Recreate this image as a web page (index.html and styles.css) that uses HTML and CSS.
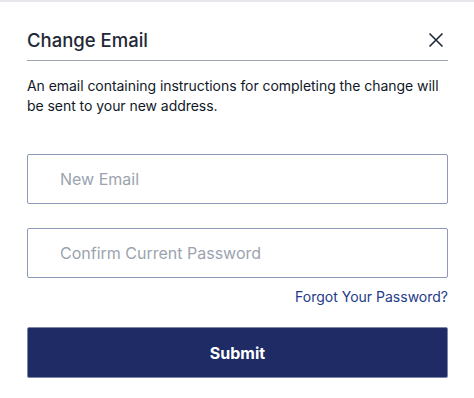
FILE: index.html
```html
<!DOCTYPE html>
<html lang="en">
<head>
    <meta charset="UTF-8">
    <meta name="viewport" content="width=device-width, initial-scale=1.0">
    <title>Change Email</title>
    <link rel="stylesheet" href="styles.css">
</head>
<body>
    <div class="modal">
        <div class="head">
            <h2 class="title">Change Email</h2>
            <button class="close" type="button" aria-label="Close">
                <svg width="16" height="16" viewBox="0 0 16 16">
                    <path d="M1.5 1.5L14.5 14.5M14.5 1.5L1.5 14.5" stroke="#1f2937" stroke-width="1.6" fill="none"/>
                </svg>
            </button>
        </div>
        <p class="info">An email containing instructions for completing the change will be sent to your new address.</p>
        <form class="form">
            <input class="field" type="email" placeholder="New Email">
            <input class="field" type="password" placeholder="Confirm Current Password">
            <div class="links">
                <a class="forgot" href="#">Forgot Your Password?</a>
            </div>
            <button class="submit" type="button">Submit</button>
        </form>
    </div>
</body>
</html>
```

FILE: styles.css
```css
body,h2,p{
    margin: 0;
    padding: 0;
}
body{
    background: #fff;
    border-top: 2px solid #e5e7eb;
    font-family: Inter, "Noto Sans", sans-serif;
    color: #1f2937;
}
.modal{
    padding: 0 26px 0 27px;
}
.head{
    display: flex;
    align-items: flex-end;
    justify-content: space-between;
    height: 59px;
    padding-bottom: 8px;
    border-bottom: 1px solid #9ca3af;
    box-sizing: border-box;
}
.title{
    font-size: 18.5px;
    font-weight: 500;
    line-height: 24px;
}
.close{
    border: 0;
    background: none;
    padding: 0;
    margin-right: 4px;
    margin-bottom: 4px;
    width: 16px;
    height: 16px;
    cursor: pointer;
}
.info{
    margin-top: 15px;
    font-size: 14px;
    line-height: 20px;
    letter-spacing: -0.05px;
    color: #111827;
}
.form{
    margin-top: 38px;
    display: flex;
    flex-direction: column;
}
.field{
    height: 50px;
    box-sizing: border-box;
    border: 1px solid #8e99b8;
    border-radius: 2px;
    padding: 0 32px;
    font-family: inherit;
    font-size: 16px;
    color: #1f2937;
    margin-bottom: 24px;
}
.field::placeholder{
    color: #9ca3af;
}
.links{
    display: flex;
    justify-content: flex-end;
    margin-top: -15px;
}
.forgot{
    color: #1e3a8a;
    font-size: 14px;
    line-height: 20px;
    text-decoration: none;
}
.submit{
    margin-top: 20px;
    height: 51px;
    border: 1px solid #7c87ab;
    border-radius: 2px;
    background: #1e2b65;
    color: #fff;
    font-family: inherit;
    font-size: 16px;
    font-weight: 700;
    cursor: pointer;
}
```
